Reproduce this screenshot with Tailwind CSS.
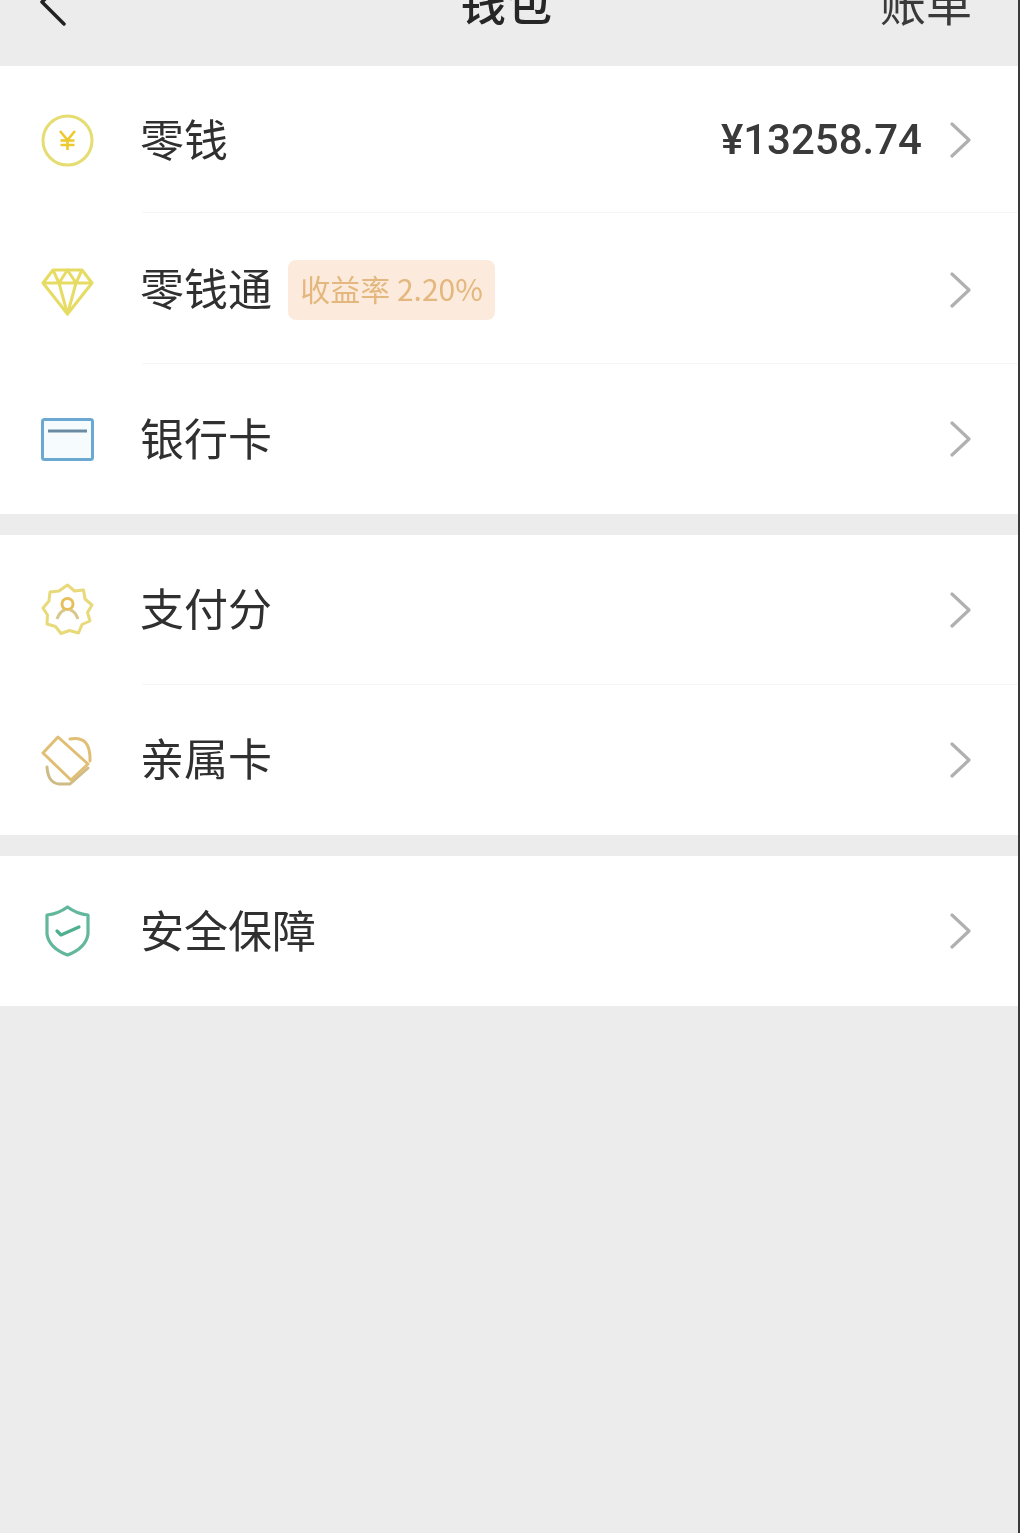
<!DOCTYPE html>
<html lang="zh-CN">
<head>
<meta charset="utf-8">
<script src="https://cdn.jsdelivr.net/npm/@tailwindcss/browser@4"></script>
</head>
<body class="m-0">
<div class="w-[1020px] h-[1533px] overflow-hidden bg-[#ececec] border-r-2 border-[#3a3a3a] blur-[0.5px] font-['Noto_Sans_CJK_SC','Noto_Sans',sans-serif] text-[#303030]">
  <header class="relative h-[66px] overflow-hidden flex justify-between items-center pl-[40px] pr-[46px]">
    <svg class="-mt-[66px] w-[28px] h-[56px]" viewBox="0 0 28 56" fill="none" stroke="#222" stroke-width="3.5" stroke-linecap="round" stroke-linejoin="round"><path d="M24 52 L2 30 L24 8"/></svg>
    <h1 class="absolute left-[460px] top-[-23px] m-0 text-[46px] leading-[46px] font-medium tracking-normal text-[#262626]">钱包</h1>
    <span class="-mt-[64px] text-[46px] leading-[46px] text-[#3a3a3a]">账单</span>
  </header>

  <section class="bg-white">
    <div class="h-[146px] pt-[2px] flex items-center pl-[41px] pr-[47px]">
      <svg class="w-[53px] h-[53px] shrink-0" viewBox="0 0 53 53" fill="none"><circle cx="26.5" cy="26.5" r="24.5" stroke="#e5dd72" stroke-width="3"/><path d="M19 17 L26.5 26 L34 17 M26.5 26 V36 M19.5 26.5 H33.5 M19.5 31 H33.5" stroke="#edc92e" stroke-width="2.6"/></svg>
      <span class="ml-[46px] pb-[5px] text-[44px] leading-none">零钱</span>
      <span class="ml-auto font-['Roboto',sans-serif] font-medium text-[42px] leading-none text-[#3a3a3a]">¥13258.74</span>
      <svg class="ml-[27px] w-[22px] h-[36px] shrink-0" viewBox="0 0 22 36" fill="none" stroke="#b0b0b0" stroke-width="3.2" stroke-linecap="round" stroke-linejoin="round"><path d="M3 2 L20 18 L3 34"/></svg>
    </div>
    <div class="h-px ml-[142px] bg-[#f6f6f6]"></div>
    <div class="h-[150px] pt-[3px] flex items-center pl-[41px] pr-[47px]">
      <svg class="mt-[4px] w-[53px] h-[48px] shrink-0" viewBox="0 0 53 48" fill="none" stroke="#e7dc63" stroke-width="3" stroke-linejoin="round"><path d="M12 2 H41 L51 15 L26.5 46 L2 15 Z"/><path d="M2 15 H51 M12 2 L18 15 L26.5 46 L35 15 L41 2 M18 15 L26.5 2 L35 15"/></svg>
      <span class="ml-[46px] pb-[5px] text-[44px] leading-none">零钱通</span>
      <span class="ml-[16px] pb-[3px] w-[207px] h-[60px] rounded-[8px] bg-[#fcebdc] flex items-center justify-center text-[30px] leading-none text-[#e3b77e]">收益率 2.20%</span>
      <svg class="ml-auto w-[22px] h-[36px] shrink-0" viewBox="0 0 22 36" fill="none" stroke="#b0b0b0" stroke-width="3.2" stroke-linecap="round" stroke-linejoin="round"><path d="M3 2 L20 18 L3 34"/></svg>
    </div>
    <div class="h-px ml-[142px] bg-[#f6f6f6]"></div>
    <div class="h-[150px] flex items-center pl-[41px] pr-[47px]">
      <svg class="w-[53px] h-[43px] shrink-0" viewBox="0 0 53 43" fill="none"><rect x="1.5" y="1.5" width="50" height="40" rx="2" stroke="#6ca9d2" stroke-width="3" fill="#f6fbfe"/><path d="M7 13 H46" stroke="#6b8ba3" stroke-width="3"/></svg>
      <span class="ml-[46px] pb-[5px] text-[44px] leading-none">银行卡</span>
      <svg class="ml-auto w-[22px] h-[36px] shrink-0" viewBox="0 0 22 36" fill="none" stroke="#b0b0b0" stroke-width="3.2" stroke-linecap="round" stroke-linejoin="round"><path d="M3 2 L20 18 L3 34"/></svg>
    </div>
  </section>

  <section class="bg-white mt-[21px]">
    <div class="h-[149px] flex items-center pl-[41px] pr-[47px]">
      <svg class="w-[53px] h-[53px] shrink-0" viewBox="0 0 53 53" fill="none" stroke="#e8d97a" stroke-width="3" stroke-linejoin="round"><path d="M26.5 2 L33.5 8 L42.5 7 L44 16 L51 22 L46.5 29.5 L49 38 L41 41.5 L37.5 50 L28.5 47.5 L20 50.5 L14.5 43.5 L6 41 L6.5 32 L2 25 L8 18 L9 9 L18 8 Z"/><circle cx="26.5" cy="21" r="5.5" stroke="#e6be5c"/><path d="M16 36 Q19 28 24 27 M37 36 Q34 28 29 27" stroke="#d9c88c"/></svg>
      <span class="ml-[46px] pb-[5px] text-[44px] leading-none">支付分</span>
      <svg class="ml-auto w-[22px] h-[36px] shrink-0" viewBox="0 0 22 36" fill="none" stroke="#b0b0b0" stroke-width="3.2" stroke-linecap="round" stroke-linejoin="round"><path d="M3 2 L20 18 L3 34"/></svg>
    </div>
    <div class="h-px ml-[142px] bg-[#f6f6f6]"></div>
    <div class="h-[150px] flex items-center pl-[41px] pr-[47px]">
      <svg class="w-[53px] h-[53px] shrink-0" viewBox="0 0 53 53" fill="none" stroke="#e0bf74" stroke-width="3" stroke-linejoin="round" stroke-linecap="round"><path d="M29 5 Q50 1 49 27"/><path d="M6 33 Q7 49 18 50 H29 L47 34" stroke="#cfbb86"/><path d="M17 3 L47 30 L30 46 L2 19 Z" fill="#fff"/></svg>
      <span class="ml-[46px] pb-[7px] text-[44px] leading-none">亲属卡</span>
      <svg class="ml-auto w-[22px] h-[36px] shrink-0" viewBox="0 0 22 36" fill="none" stroke="#b0b0b0" stroke-width="3.2" stroke-linecap="round" stroke-linejoin="round"><path d="M3 2 L20 18 L3 34"/></svg>
    </div>
  </section>

  <section class="bg-white mt-[21px]">
    <div class="h-[150px] flex items-center pl-[41px] pr-[47px]">
      <svg class="w-[53px] h-[52px] shrink-0" viewBox="0 0 53 52" fill="none" stroke="#62b79d" stroke-width="3.2" stroke-linejoin="round" stroke-linecap="round"><path d="M26.5 2 Q36 9 47 10 V29 Q45 43 26.5 50 Q8 43 6 29 V10 Q17 9 26.5 2 Z"/><path d="M16 26 L20 30 L38 22" stroke="#4fb08f"/></svg>
      <span class="ml-[46px] pb-[5px] text-[44px] leading-none">安全保障</span>
      <svg class="ml-auto w-[22px] h-[36px] shrink-0" viewBox="0 0 22 36" fill="none" stroke="#b0b0b0" stroke-width="3.2" stroke-linecap="round" stroke-linejoin="round"><path d="M3 2 L20 18 L3 34"/></svg>
    </div>
  </section>
</div>
</body>
</html>
